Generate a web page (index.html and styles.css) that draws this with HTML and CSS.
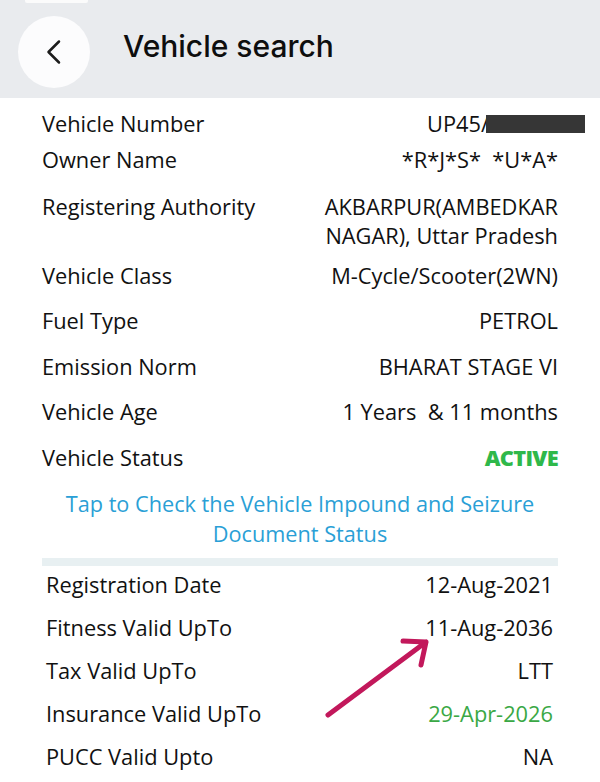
FILE: index.html
```html
<!DOCTYPE html>
<html lang="en">
<head>
<meta charset="utf-8">
<title>Vehicle search</title>
<link rel="stylesheet" href="styles.css">
</head>
<body>
<div class="screen">
  <header class="topbar">
    <span class="status-tab"></span>
    <button class="back" aria-label="Back">
      <svg width="20" height="28" viewBox="0 0 20 28"><path d="M15 3.5 L4.5 14 L15 24.5" fill="none" stroke="#1c1c1c" stroke-width="2.5" stroke-linecap="round" stroke-linejoin="round"/></svg>
    </button>
    <h1 class="title">Vehicle search</h1>
  </header>

  <section class="details">
    <div class="row row--lead"><span class="label">Vehicle Number</span><span class="value">UP45/<span class="redact"></span></span></div>
    <div class="row row--owner"><span class="label">Owner Name</span><span class="value">*R*J*S*&nbsp; *U*A*</span></div>
    <div class="row row--authority"><span class="label">Registering Authority</span><span class="value value--wrap">AKBARPUR(AMBEDKAR NAGAR), Uttar Pradesh</span></div>
    <div class="row"><span class="label">Vehicle Class</span><span class="value">M-Cycle/Scooter(2WN)</span></div>
    <div class="row"><span class="label">Fuel Type</span><span class="value">PETROL</span></div>
    <div class="row"><span class="label">Emission Norm</span><span class="value">BHARAT STAGE VI</span></div>
    <div class="row"><span class="label">Vehicle Age</span><span class="value">1 Years&nbsp; &amp; 11 months</span></div>
    <div class="row"><span class="label">Vehicle Status</span><span class="value value--active">ACTIVE</span></div>
  </section>

  <a class="impound-link" href="#">Tap to Check the Vehicle Impound and Seizure Document Status</a>

  <div class="divider"></div>

  <section class="validity">
    <div class="row"><span class="label">Registration Date</span><span class="value">12-Aug-2021</span></div>
    <div class="row"><span class="label">Fitness Valid UpTo</span><span class="value">11-Aug-2036</span></div>
    <div class="row"><span class="label">Tax Valid UpTo</span><span class="value">LTT</span></div>
    <div class="row"><span class="label">Insurance Valid UpTo</span><span class="value value--ok">29-Apr-2026</span></div>
    <div class="row"><span class="label">PUCC Valid Upto</span><span class="value">NA</span></div>
  </section>

  <svg class="arrow" width="120" height="100" viewBox="0 0 120 100">
    <path d="M8 85 L106 12 M83 11 L106 12 L101 35" fill="none" stroke="#c2185b" stroke-width="5" stroke-linecap="round" stroke-linejoin="round"/>
  </svg>
</div>
</body>
</html>
```

FILE: styles.css
```css
* { box-sizing: border-box; }
html, body { margin: 0; padding: 0; background: #ffffff; }
body { font-family: "Open Sans", "Noto Sans", sans-serif; color: #111111; }

.screen { position: relative; width: 600px; height: 782px; overflow: hidden; background: #fff; }

.topbar {
  position: relative;
  height: 98px;
  background: #e9ebee;
  display: flex;
  align-items: center;
  padding: 6px 0 0 18px;
}
.status-tab {
  position: absolute;
  left: 25px; top: 0;
  width: 63px; height: 3px;
  background: #fbfbfb;
  border-radius: 0 0 2px 2px;
}
.back {
  width: 72px; height: 72px;
  border-radius: 50%;
  border: 0;
  background: #fcfcfd;
  display: flex; align-items: center; justify-content: center;
  padding: 0;
  margin-right: 33px;
  flex-shrink: 0;
}
.title {
  margin: 0;
  font-family: Inter, "Open Sans", sans-serif;
  font-weight: 500;
  font-size: 30px;
  line-height: 36px;
  color: #0e0e0e;
  padding-bottom: 12px;
}

.row {
  display: flex;
  justify-content: space-between;
  align-items: flex-start;
  font-size: 21.8px;
  line-height: 30px;
  padding: 7.75px 0;
}
.label { white-space: nowrap; }
.value { text-align: right; white-space: nowrap; }

.details { padding: 10.5px 42px 0 42px; }
.details .row--lead { padding: 0; }
.details .row--owner { padding-top: 6.5px; }
.details .row--authority { padding: 9px 0 3px 0; }
.value--wrap { max-width: 240px; text-align: right; white-space: normal; line-height: 29px; }
.value--active { font-weight: 800; color: #2fb84a; letter-spacing: -0.7px; }

.redact {
  display: inline-block;
  width: 99px; height: 18px;
  background: #363636;
  vertical-align: -1px;
  margin-left: -3px;
  margin-right: -27px;
}

.impound-link {
  display: block;
  margin: 8.6px 40px 0 40px;
  text-align: center;
  font-size: 21.7px;
  line-height: 30px;
  color: #2a9fd6;
  text-decoration: none;
}

.divider {
  height: 8px;
  margin: 9.65px 42px 0 42px;
  background: #e8f0f2;
}

.validity { padding: 0 47px 0 46px; }
.validity .row { padding: 6.5px 0; }
.validity .row:first-child { padding-top: 3.35px; }
.value--ok { color: #3aa845; }

.arrow {
  position: absolute;
  left: 320px;
  top: 630px;
}
```
